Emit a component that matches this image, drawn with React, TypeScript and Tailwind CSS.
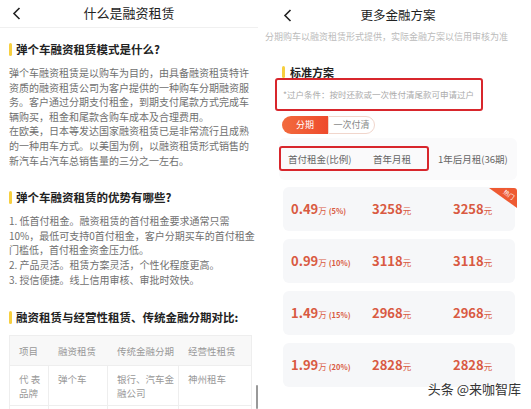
const font = { fontFamily: '"Noto Sans CJK SC", "Noto Sans", sans-serif' };

const Heading = ({ children }: { children: React.ReactNode }) => (
  <div className="flex items-center h-4">
    <span className="w-[3px] h-[13px] bg-[#f7cf3f] rounded-sm mr-[4px]" />
    <span className="text-[11.5px] font-bold text-[#222] leading-4 whitespace-nowrap">{children}</span>
  </div>
);

const LeftPanel = () => (
  <div className="w-[258px] shrink-0 relative overflow-hidden">
    <div className="h-[28px] relative flex items-center justify-center border-b border-[#f0f0f0]">
      <svg className="absolute left-[12px] top-[7px]" width="9" height="13" viewBox="0 0 9 13">
        <path d="M7.5 1 L2 6.5 L7.5 12" fill="none" stroke="#222" strokeWidth="1.6" />
      </svg>
      <span className="text-[13px] text-[#222] -mt-[2px]">什么是融资租赁</span>
    </div>
    <div className="pl-[9px] pr-[4px]">
      <div className="mt-[13px]">
        <Heading>弹个车融资租赁模式是什么?</Heading>
      </div>
      <p className="mt-[9px] text-[10px] leading-[14.6px] text-[#707070] whitespace-nowrap">
        弹个车融资租赁是以购车为目的，由具备融资租赁特许<br />
        资质的融资租赁公司为客户提供的一种购车分期融资服<br />
        务。客户通过分期支付租金，到期支付尾款方式完成车<br />
        辆购买，租金和尾款含购车成本及合理费用。<br />
        在欧美，日本等发达国家融资租赁已是非常流行且成熟<br />
        的一种用车方式。以美国为例，以融资租赁形式销售的<br />
        新汽车占汽车总销售量的三分之一左右。
      </p>
      <div className="mt-[21px]">
        <Heading>弹个车融资租赁的优势有哪些?</Heading>
      </div>
      <p className="mt-[9px] text-[10px] leading-[14.6px] text-[#707070] whitespace-nowrap">
        1. 低首付租金。融资租赁的首付租金要求通常只需<br />
        10%，最低可支持0首付租金，客户分期买车的首付租金<br />
        门槛低，首付租金资金压力低。<br />
        2. 产品灵活。租赁方案灵活，个性化程度更高。<br />
        3. 授信便捷。线上信用审核、审批时效快。
      </p>
      <div className="mt-[22px]">
        <Heading>融资租赁与经营性租赁、传统金融分期对比:</Heading>
      </div>
      <div className="mt-[10px] w-[243px] border border-[#eeeeee] text-[9.5px] text-[#999]">
        <div className="grid grid-cols-[39px_59px_71px_1fr] h-[30px] bg-[#f8f8f8] border-b border-[#eeeeee]">
          <div className="pl-[9px] flex items-center">项目</div>
          <div className="pl-[9px] flex items-center">融资租赁</div>
          <div className="pl-[9px] flex items-center">传统金融分期</div>
          <div className="pl-[9px] flex items-center">经营性租赁</div>
        </div>
        <div className="grid grid-cols-[39px_59px_71px_1fr] h-[40px] leading-[14px] border-b border-[#eeeeee]">
          <div className="pl-[9px] pt-[6px] border-r border-[#eeeeee]">代 表<br />品牌</div>
          <div className="pl-[9px] pt-[6px] border-r border-[#eeeeee]">弹个车</div>
          <div className="pl-[9px] pt-[6px] border-r border-[#eeeeee]">银行、汽车金<br />融公司</div>
          <div className="pl-[9px] pt-[6px]">神州租车</div>
        </div>
        <div className="grid grid-cols-[39px_59px_71px_1fr] h-[20px]">
          <div className="border-r border-[#eeeeee]" />
          <div className="border-r border-[#eeeeee]" />
          <div className="border-r border-[#eeeeee]" />
          <div />
        </div>
      </div>
    </div>
    <span className="absolute right-0 top-[385px] w-[2px] h-[24px] bg-[#999] rounded-full" />
  </div>
);

const rows = [
  { down: '0.49', pct: '(5%)', first: '3258', after: '3258', hot: true },
  { down: '0.99', pct: '(10%)', first: '3118', after: '3118' },
  { down: '1.49', pct: '(15%)', first: '2968', after: '2968' },
  { down: '1.99', pct: '(20%)', first: '2828', after: '2828' },
];

const RightPanel = () => (
  <div className="flex-1 relative overflow-hidden">
    <div className="h-[30px] relative flex items-center justify-center">
      <svg className="absolute left-[18px] top-[9px]" width="9" height="13" viewBox="0 0 9 13">
        <path d="M7.5 1 L2 6.5 L7.5 12" fill="none" stroke="#222" strokeWidth="1.6" />
      </svg>
      <span className="text-[12.5px] text-[#222]">更多金融方案</span>
    </div>
    <div className="h-[14px] text-[9px] leading-[14px] text-[#bbb] whitespace-nowrap overflow-hidden">
      分期购车以融资租赁形式提供，实际金融方案以信用审核为准
    </div>
    <div className="mt-[20px] pl-[17px] flex items-center h-4">
      <span className="w-[3px] h-[12px] bg-[#f7cf3f] rounded-sm mr-[5px]" />
      <span className="text-[11px] font-bold text-[#222] leading-4">标准方案</span>
    </div>
    <div className="ml-[10px] w-[208px] h-[33px] -mt-[2px] border-2 border-[#d8262c] rounded-[3px] flex items-center pl-[6px] text-[8.5px] text-[#aaa]">
      *过户条件：按时还款或一次性付清尾款可申请过户
    </div>
    <div className="ml-[17px] mt-[5px] flex h-[18px] text-[9px]">
      <div className="w-[46px] rounded-l-full bg-gradient-to-r from-[#f26a3d] to-[#ee4a2c] text-white flex items-center justify-center">分期</div>
      <div className="w-[47px] rounded-r-full border border-[#f1d6cc] text-[#888] flex items-center justify-center">一次付清</div>
    </div>
    <div className="mt-[4px] ml-[14px] mr-[14px] h-[42px] bg-[#fafafb] rounded-md relative flex items-center text-[9.5px] text-[#666]">
      <div className="absolute left-0 top-[8px] w-[150px] h-[25px] border-2 border-[#d8262c] rounded-[3px]" />
      <span className="absolute left-[9px]">首付租金(比例)</span>
      <span className="absolute left-[94px]">首年月租</span>
      <span className="absolute left-[159px]">1年后月租(36期)</span>
    </div>
    <div className="mt-[7px] ml-[18px] mr-[16px] flex flex-col gap-[8px]">
      {rows.map((r) => (
        <div key={r.down} className="h-[44px] bg-[#f6f7f9] rounded-md relative flex items-center text-[#d95a42] font-bold">
          <span className="absolute left-[8px] flex items-baseline">
            <span className="text-[13px]">{r.down}</span>
            <span className="text-[8.5px] font-normal">万</span>
            <span className="text-[7.5px] ml-[2px]">{r.pct}</span>
          </span>
          <span className="absolute left-[89px] flex items-baseline">
            <span className="text-[13px]">{r.first}</span>
            <span className="text-[8.5px] font-normal">元</span>
          </span>
          <span className="absolute left-[170px] flex items-baseline">
            <span className="text-[13px]">{r.after}</span>
            <span className="text-[8.5px] font-normal">元</span>
          </span>
          {r.hot && (
            <div className="absolute right-[-2px] top-[1px] w-[28px] h-[20px]">
              <svg width="28" height="20" viewBox="0 0 28 20" className="absolute inset-0">
                <path d="M0 0 H25 Q28 0 28 3 V20 Z" fill="#ee5a32" />
              </svg>
              <span className="absolute right-[2px] top-[2px] text-[6px] text-white font-normal rotate-[35deg]">热门</span>
            </div>
          )}
        </div>
      ))}
    </div>
    <div className="absolute right-[10px] top-[379px] text-[13px] text-[#333] whitespace-nowrap [text-shadow:0_0_2px_#fff,0_0_2px_#fff]">
      头条 @来咖智库
    </div>
  </div>
);

export default function App() {
  return (
    <div className="w-[531px] h-[409px] bg-white flex overflow-hidden" style={font}>
      <LeftPanel />
      <div className="w-[7px] shrink-0" />
      <RightPanel />
    </div>
  );
}
